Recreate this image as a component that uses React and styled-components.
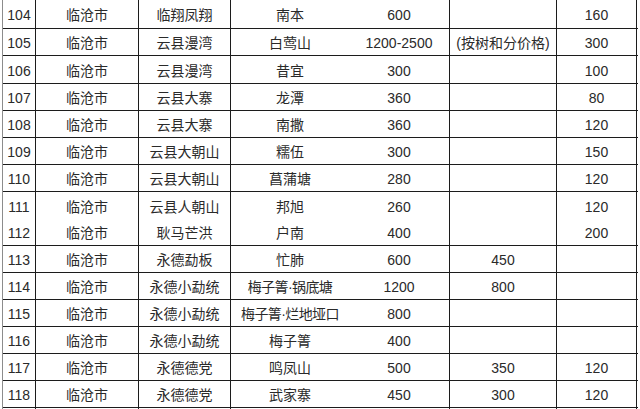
import React from "react";
import styled, { createGlobalStyle } from "styled-components";

const Global = createGlobalStyle`
  html, body { margin: 0; padding: 0; background: #fff; }
  body { width: 640px; height: 409px; overflow: hidden; }
`;

const Sheet = styled.div`
  margin-left: 2px;
  width: 635px;
  height: 409px;
  overflow: hidden;
  border-left: 1px solid #8c8c8c;
  display: flex;
  flex-direction: column;
  color: #2a2a2a;
`;

const COLS = "33px 103px 92px 118px 101px 107px 80px";

const Row = styled.div`
  display: grid;
  grid-template-columns: ${COLS};
  height: ${(p) => p.$h}px;
  box-sizing: border-box;
  border-bottom: ${(p) => (p.$noLine ? "none" : "1px solid #1c1c1c")};
  flex: none;
`;

const Cell = styled.div`
  box-sizing: border-box;
  display: flex;
  align-items: center;
  justify-content: center;
  padding-top: 2px;
  border-right: ${(p) => (p.$open ? "none" : "1px solid #1c1c1c")};
  white-space: nowrap;
  overflow: visible;
  font-family: ${(p) =>
    p.$num
      ? '"Liberation Sans", Arial, sans-serif'
      : '"Liberation Sans", "Noto Sans CJK SC", sans-serif'};
  font-size: 14px;
  line-height: 1;
  letter-spacing: ${(p) => (p.$tight ? "-0.6px" : "0")};
`;

const rows = [
  ["104", "临沧市", "临翔凤翔", "南本", "600", "", "160"],
  ["105", "临沧市", "云县漫湾", "白莺山", "1200-2500", "(按树和分价格)", "300"],
  ["106", "临沧市", "云县漫湾", "昔宜", "300", "", "100"],
  ["107", "临沧市", "云县大寨", "龙潭", "360", "", "80"],
  ["108", "临沧市", "云县大寨", "南撒", "360", "", "120"],
  ["109", "临沧市", "云县大朝山", "糯伍", "300", "", "150"],
  ["110", "临沧市", "云县大朝山", "菖蒲塘", "280", "", "120"],
  ["111", "临沧市", "云县人朝山", "邦旭", "260", "", "120"],
  ["112", "临沧市", "耿马芒洪", "户南", "400", "", "200"],
  ["113", "临沧市", "永德勐板", "忙肺", "600", "450", ""],
  ["114", "临沧市", "永德小勐统", "梅子箐·锅底塘", "1200", "800", ""],
  ["115", "临沧市", "永德小勐统", "梅子箐·烂地垭口", "800", "", ""],
  ["116", "临沧市", "永德小勐统", "梅子箐", "400", "", ""],
  ["117", "临沧市", "永德德党", "鸣凤山", "500", "350", "120"],
  ["118", "临沧市", "永德德党", "武家寨", "450", "300", "120"],
  ["", "", "", "", "", "", ""],
];

const heights = [29, 27, 28, 27, 27, 27, 27, 27, 27, 27, 27, 27, 27, 27, 27, 2];

const isNum = (s) => /^[0-9\-]*$/.test(s);

export default function App() {
  return (
    <>
      <Global />
      <Sheet>
        {rows.map((r, i) => (
          <Row key={i} $h={heights[i]} $noLine={r[0] === "111" || i === rows.length - 1}>
            {r.map((c, j) => (
              <Cell
                key={j}
                $open={j === 3}
                $num={isNum(c)}
                $tight={c.includes("·")}
              >
                {c}
              </Cell>
            ))}
          </Row>
        ))}
      </Sheet>
    </>
  );
}
